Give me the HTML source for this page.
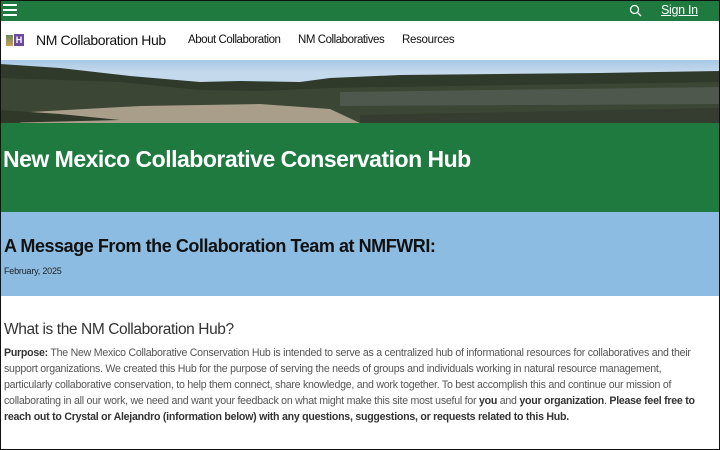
<!DOCTYPE html>
<html><head><meta charset="utf-8">
<style>
*{margin:0;padding:0;box-sizing:border-box}
html,body{width:720px;height:450px;overflow:hidden;background:#fff;font-family:"Liberation Sans",sans-serif}
.frame{position:absolute;inset:0;border:1px solid #111;z-index:10;pointer-events:none}
.top{position:absolute;left:0;top:0;width:720px;height:21px;background:#1f7a40}
.nav{position:absolute;left:0;top:21px;width:720px;height:39px;background:#fff}
.hero{position:absolute;left:0;top:60px;width:720px;height:63px;overflow:hidden;
background:linear-gradient(#a9c8e6 0,#c4d9ec 20%,#c4d9ec 100%)}
.green{position:absolute;left:0;top:123px;width:720px;height:89px;background:#1f7a40}
.blue{position:absolute;left:0;top:212px;width:720px;height:84px;background:#8cbce2}
.t{position:absolute;white-space:nowrap}
</style></head><body>
<div class="frame"></div>
<div class="top">
 <div style="position:absolute;left:3px;top:4px;width:14px;height:2px;background:#fff"></div>
 <div style="position:absolute;left:3px;top:9px;width:14px;height:2px;background:#fff"></div>
 <div style="position:absolute;left:3px;top:14px;width:14px;height:2px;background:#fff"></div>
 <svg style="position:absolute;left:629px;top:4px" width="13" height="13" viewBox="0 0 13 13"><circle cx="5.5" cy="5.5" r="4" fill="none" stroke="#fff" stroke-width="1.3"/><path d="M8.5 8.5L12 12" stroke="#fff" stroke-width="1.3"/></svg>
 <span class="t" style="left:661px;top:3px;color:#fff;font-size:12.5px;text-decoration:underline;letter-spacing:-0.3px">Sign In</span>
</div>
<div class="nav">
 <div style="position:absolute;left:6px;top:14px;width:7px;height:11px;background:linear-gradient(#6a8a5a,#c9a050)"></div>
 <div style="position:absolute;left:14px;top:13px;width:10px;height:12px;background:#6a4a9a;color:#fff;font-size:9px;font-weight:bold;text-align:center;line-height:12px">H</div>
 <span class="t" style="left:36px;top:11px;font-size:14px;color:#111;letter-spacing:-0.4px">NM Collaboration Hub</span>
 <span class="t" style="left:188px;top:13px;font-size:11.5px;color:#111;letter-spacing:-0.45px">About Collaboration</span>
 <span class="t" style="left:298px;top:13px;font-size:11.5px;color:#111;letter-spacing:-0.45px">NM Collaboratives</span>
 <span class="t" style="left:402px;top:13px;font-size:11.5px;color:#111;letter-spacing:-0.3px">Resources</span>
</div>
<div class="hero">
 <svg width="720" height="63" viewBox="0 0 720 63" preserveAspectRatio="none" style="position:absolute;left:0;top:0">
  <path d="M0 4 L60 8 L130 16 L200 22 L240 21 L300 22 L330 18 L400 15 L500 14 L600 13 L720 11 L720 63 L0 63Z" fill="#2f3a2a"/>
  <path d="M0 18 L120 22 L200 30 L260 31 L330 28 L450 26 L720 22 L720 63 L0 63Z" fill="#3b4634"/>
  <path d="M340 32 L720 27 L720 44 L340 46Z" fill="#555c52" opacity="0.8"/>
  <path d="M30 52 L140 46 L260 44 L330 49 L360 63 L20 63Z" fill="#a89e8a"/>
  <path d="M0 50 L60 54 L120 60 L0 63Z" fill="#2f3829"/>
  <path d="M360 55 L720 48 L720 63 L360 63Z" fill="#343d2f"/>
 </svg>
</div>
<div class="green">
 <span class="t" style="left:3px;top:23px;font-size:23px;font-weight:bold;color:#fff;letter-spacing:-0.5px">New Mexico Collaborative Conservation Hub</span>
</div>
<div class="blue">
 <span class="t" style="left:4px;top:24px;font-size:18px;font-weight:bold;color:#111;letter-spacing:-0.45px">A Message From the Collaboration Team at NMFWRI:</span>
 <span class="t" style="left:4px;top:54px;font-size:9px;color:#222;letter-spacing:-0.2px">February, 2025</span>
</div>
<div class="t" style="left:4px;top:321px;font-size:15.5px;color:#333;letter-spacing:-0.4px">What is the NM Collaboration Hub?</div>
<div style="position:absolute;left:4px;top:345px;width:712px;font-size:10.6px;line-height:16px;color:#555;letter-spacing:-0.25px;white-space:nowrap">
<b style="color:#333">Purpose:</b> The New Mexico Collaborative Conservation Hub is intended to serve as a centralized hub of informational resources for collaboratives and their<br>
support organizations. We created this Hub for the purpose of serving the needs of groups and individuals working in natural resource management,<br>
particularly collaborative conservation, to help them connect, share knowledge, and work together. To best accomplish this and continue our mission of<br>
collaborating in all our work, we need and want your feedback on what might make this site most useful for <b style="color:#333">you</b> and <b style="color:#333">your organization</b>. <b style="color:#333">Please feel free to</b><br>
<b style="color:#333">reach out to Crystal or Alejandro (information below) with any questions, suggestions, or requests related to this Hub.</b>
</div>
</body></html>
